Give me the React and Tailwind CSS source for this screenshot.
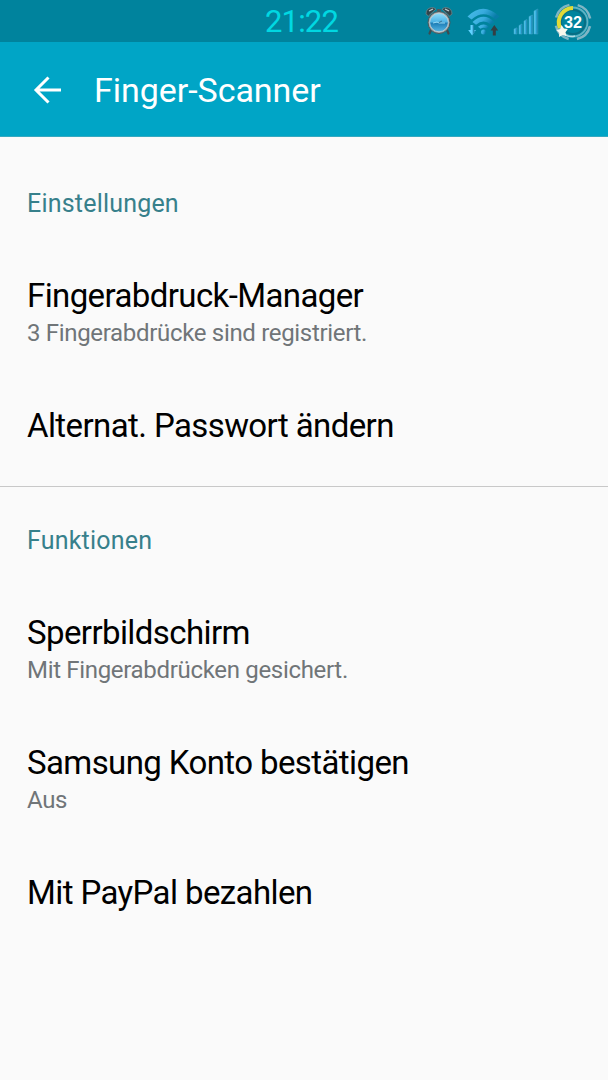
import React from "react";

function AlarmIcon() {
  return (
    <svg width="28" height="30" viewBox="0 0 28 30">
      <defs>
        <linearGradient id="face" x1="0" y1="0" x2="0" y2="1">
          <stop offset="0" stopColor="#8fdcf8" />
          <stop offset="0.45" stopColor="#4fb4e6" />
          <stop offset="0.55" stopColor="#1f7fb8" />
          <stop offset="1" stopColor="#56b6e4" />
        </linearGradient>
      </defs>
      <path d="M6 24 L4.500 27.500 M22 24 L23.500 27.500" stroke="#3d4b50" strokeWidth="2.2" strokeLinecap="round" />
      <path d="M1 8 Q1 1.500 8 1.500 L11 3 L3.500 10Z M27 8 Q27 1.500 20 1.500 L17 3 L24.500 10Z" fill="#30454c" stroke="#6d8288" strokeWidth="0.800" />
      <path d="M4 5 L8 3 M20 3 L24 5" stroke="#c5cdcf" strokeWidth="1.300" />
      <path d="M12 3 H16 V6 H12Z" fill="#4b5b60" />
      <circle cx="14" cy="16.500" r="11" fill="#9ca6a9" stroke="#48585d" strokeWidth="1" />
      <circle cx="14" cy="16.500" r="9.300" fill="url(#face)" stroke="#d1d9db" strokeWidth="0.700" />
      <path d="M8 17 L12 16 L14 17 L20 17" fill="none" stroke="#a5e2f8" strokeWidth="0.900" />
      <path d="M14 16.500 L17 15" stroke="#30617b" strokeWidth="0.800" />
    </svg>
  );
}

function WifiIcon() {
  return (
    <svg width="33" height="30" viewBox="0 0 33 30">
      <defs>
        <linearGradient id="waves" x1="0" y1="0" x2="1" y2="0.300">
          <stop offset="0" stopColor="#48bfe9" />
          <stop offset="0.550" stopColor="#37aadd" />
          <stop offset="1" stopColor="#087da8" />
        </linearGradient>
      </defs>
      <g fill="url(#waves)">
        <path d="M0.500 9.500 Q16 -6 32.500 9.500 L28.500 12.500 Q16.500 2 4.500 12.500Z" />
        <path d="M5.500 15 Q16.500 4.500 27.500 15 L24 17.800 Q16.500 11 9 17.800Z" />
        <path d="M11 19.800 Q16.500 15 22 19.800 L19.500 21.800 Q16.500 19.500 13.500 21.800Z" />
        <circle cx="16.500" cy="25" r="2.500" />
      </g>
      <path d="M3.500 18 H6.700 V23 H9 L5.100 28.500 L1.200 23 H3.500Z" fill="#62d2ff" />
      <path d="M5.700 18 H7 V23.500 H8.500 L5.700 28Z" fill="#2387b0" />
      <path d="M25.800 28.500 V23.500 H23.500 L27.300 18 L31.200 23.500 H28.800 V28.500Z" fill="#343e43" />
    </svg>
  );
}

function SignalIcon() {
  return (
    <svg width="26" height="29" viewBox="0 0 26 29">
      <defs>
        <linearGradient id="bars" x1="0" y1="0" x2="1" y2="0">
          <stop offset="0" stopColor="#65c9ec" />
          <stop offset="0.450" stopColor="#36b4e3" />
          <stop offset="1" stopColor="#13739f" />
        </linearGradient>
      </defs>
      <g fill="url(#bars)" stroke="#41a9cd" strokeWidth="0.500">
        <path d="M1 22 L4 20.800 V27 H1Z" />
        <path d="M6 18.500 L9 17 V27 H6Z" />
        <path d="M11 14 L14 12.500 V27 H11Z" />
        <path d="M16 9.500 L19.500 8 V27 H16Z" />
        <path d="M21 4 L24.800 2 V27 H21Z" />
      </g>
    </svg>
  );
}

function BatteryIcon() {
  return (
    <svg width="38" height="40" viewBox="0 0 38 40">
      <g fill="none">
        <circle cx="19" cy="20" r="17.500" stroke="#7fb5c4" strokeWidth="2.500" strokeDasharray="19 8.490" strokeDashoffset="-4.250" />
        <circle cx="19" cy="20" r="14.500" stroke="#5fb2c3" strokeWidth="1.800" />
        <circle cx="19" cy="20" r="12" stroke="#086e84" strokeWidth="2" />
        <path d="M6 26 A14.300 14.300 0 0 1 19 6" stroke="#e0da38" strokeWidth="4" />
        <path d="M9 31 Q14 36 21 34" stroke="#b4dde6" strokeWidth="1.500" />
      </g>
      <path d="M7.500 23 L10 26.600 L13.800 27 L11.500 30.300 L12.300 34 L8.600 32.900 L5 35 L5.300 31 L2.500 28 L6.200 27Z" fill="#f8f7ec" />
      <text x="19" y="26" textAnchor="middle" fill="#fff" fontFamily="Liberation Sans, sans-serif" fontSize="17" fontWeight="700" textLength="18" lengthAdjust="spacingAndGlyphs">32</text>
    </svg>
  );
}

function Section({ title, children }) {
  return (
    <section>
      <h2 className="h-[107px] pt-[34px] text-[25px] leading-10 tracking-[0.2px] text-[#37808b]">{title}</h2>
      {children}
    </section>
  );
}

function Item({ title, summary }) {
  return (
    <div className="pt-[19px] pb-[38px]">
      <div className="text-[33px] leading-10 tracking-[-0.6px] text-black">{title}</div>
      {summary && <div className="mt-px text-[24px] leading-8 tracking-[-0.32px] text-[#707578]">{summary}</div>}
    </div>
  );
}

export default function App() {
  return (
    <div className="flex h-[1080px] w-[608px] flex-col overflow-hidden bg-[#fafafa] font-['Roboto',sans-serif]">
      <div className="grid h-[42px] shrink-0 grid-cols-[1fr_auto_1fr] items-center bg-[#00839d]">
        <span />
        <span className="pt-px pr-[5px] text-[31px] leading-[42px] tracking-[-0.8px] text-[#00d8e2]">21:22</span>
        <div className="flex h-[42px] items-center justify-end pr-4">
          <div className="mr-[14px] -mt-[2px]"><AlarmIcon /></div>
          <div className="mr-[13px]"><WifiIcon /></div>
          <div className="mr-[15px]"><SignalIcon /></div>
          <BatteryIcon />
        </div>
      </div>
      <header className="flex h-[95px] shrink-0 items-center border-b border-[#35a9c0] bg-[#00a5c6] pl-[33px]">
        <svg className="mt-px" width="30" height="30" viewBox="0 0 30 30" fill="none" stroke="white" strokeWidth="3">
          <path d="M15.500 2.500 L3 15 L15.500 27.500 M3 15 H28" />
        </svg>
        <h1 className="ml-[31px] pt-[2px] text-[34px] leading-10 tracking-[-0.05px] text-white">Finger-Scanner</h1>
      </header>
      <main className="pl-[27px] pt-[13px]">
        <Section title="Einstellungen">
          <Item title="Fingerabdruck-Manager" summary="3 Fingerabdrücke sind registriert." />
          <div className="h-[99px]"><Item title="Alternat. Passwort ändern" /></div>
        </Section>
        <hr className="-ml-[27px] border-t border-[#c8c8c8]" />
        <Section title="Funktionen">
          <Item title="Sperrbildschirm" summary="Mit Fingerabdrücken gesichert." />
          <Item title="Samsung Konto bestätigen" summary="Aus" />
          <Item title="Mit PayPal bezahlen" />
        </Section>
      </main>
    </div>
  );
}
